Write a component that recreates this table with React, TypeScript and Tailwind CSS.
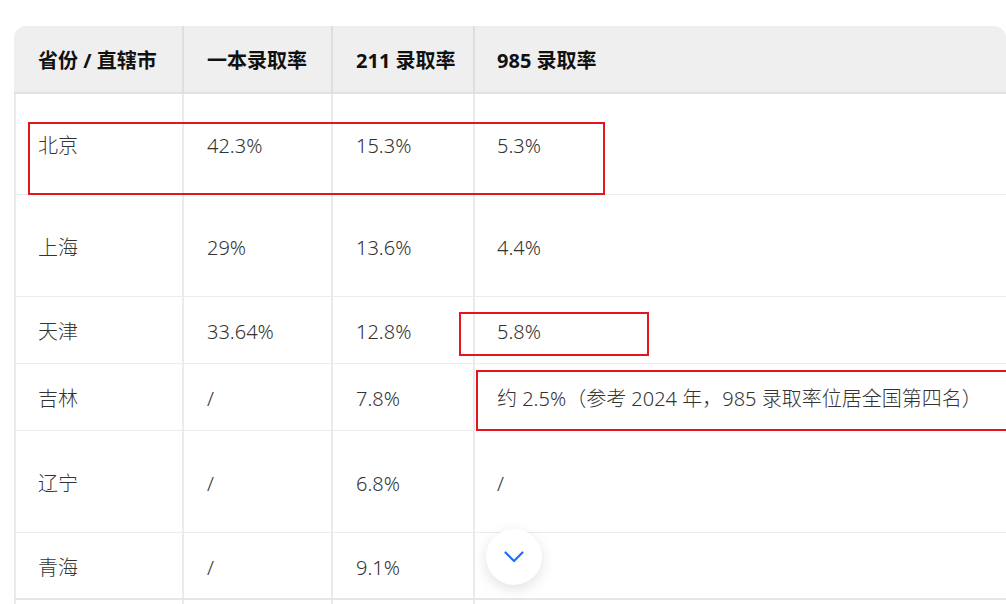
const rows = [
  { name: '北京', first: '42.3%', r211: '15.3%', r985: '5.3%', h: 'h-[101px]' },
  { name: '上海', first: '29%', r211: '13.6%', r985: '4.4%', h: 'h-[102px]' },
  { name: '天津', first: '33.64%', r211: '12.8%', r985: '5.8%', h: 'h-[67px]' },
  {
    name: '吉林',
    first: '/',
    r211: '7.8%',
    r985: '约 2.5%（参考 2024 年，985 录取率位居全国第四名）',
    h: 'h-[67px]',
  },
  { name: '辽宁', first: '/', r211: '6.8%', r985: '/', h: 'h-[102px]' },
  { name: '青海', first: '/', r211: '9.1%', r985: '', h: 'h-[67px]' },
]

const cols = 'grid grid-cols-[168px_149px_142px_533px]'

function ChevronDown() {
  return (
    <svg width="20" height="12" viewBox="0 0 20 12" fill="none">
      <polyline
        points="1.5,1.5 10,10 18.5,1.5"
        stroke="#1f6bff"
        strokeWidth="2.2"
        strokeLinecap="round"
        strokeLinejoin="round"
      />
    </svg>
  )
}

export default function App() {
  return (
    <div
      className="relative h-[604px] overflow-hidden bg-white"
      style={{ fontFamily: '"Noto Sans", "Noto Sans CJK SC", sans-serif' }}
    >
      <div className="pt-[26px] pl-[14px]">
        <div className="w-[992px] rounded-t-[12px] overflow-hidden">
          {/* Header */}
          <div className={`${cols} h-[68px] bg-[#efefef] border-b-2 border-[#e2e2e2] text-[20px] font-bold text-[#111]`}>
            <div className="flex items-center pt-[4px] pl-[24px]">省份 / 直辖市</div>
            <div className="flex items-center pt-[4px] pl-[23px] border-l-2 border-[#dedede]">一本录取率</div>
            <div className="flex items-center pt-[4px] pl-[23px] border-l-2 border-[#dedede]">211 录取率</div>
            <div className="flex items-center pt-[4px] pl-[22px] border-l-2 border-[#dedede]">985 录取率</div>
          </div>

          {/* Body */}
          {rows.map((row, i) => (
            <div
              key={row.name}
              className={`${cols} ${row.h} ${i === 5 ? 'border-b-2 border-[#e6e6e6]' : 'border-b border-[#ebebeb]'} text-[20px] font-light text-[#333]`}
            >
              <div className="flex items-center pt-[4px] pl-[22px] border-l-2 border-[#ebebeb]">{row.name}</div>
              <div className="flex items-center pt-[4px] pl-[23px] border-l-2 border-[#ebebeb]">{row.first}</div>
              <div className="flex items-center pt-[4px] pl-[23px] border-l-2 border-[#ebebeb]">{row.r211}</div>
              <div className="flex items-center pt-[4px] pl-[22px] border-l-2 border-[#ebebeb] whitespace-nowrap">{row.r985}</div>
            </div>
          ))}

          {/* next row, cut off by the window */}
          <div className={`${cols} h-[67px]`}>
            <div className="border-l-2 border-[#ebebeb]" />
            <div className="border-l-2 border-[#ebebeb]" />
            <div className="border-l-2 border-[#ebebeb]" />
            <div className="border-l-2 border-[#ebebeb]" />
          </div>
        </div>
      </div>

      {/* Annotation boxes */}
      <div className="absolute left-[28px] top-[122px] w-[577px] h-[73px] border-2 border-[#e5141f]" />
      <div className="absolute left-[459px] top-[312px] w-[190px] h-[44px] border-2 border-[#e5141f]" />
      <div className="absolute left-[476px] top-[370px] w-[560px] h-[61px] border-2 border-[#e5141f]" />

      {/* Scroll button */}
      <button className="absolute left-[486px] top-[529px] w-[56px] h-[56px] rounded-full bg-white shadow-[0_4px_14px_rgba(0,0,0,0.12)] flex items-center justify-center">
        <ChevronDown />
      </button>
    </div>
  )
}
